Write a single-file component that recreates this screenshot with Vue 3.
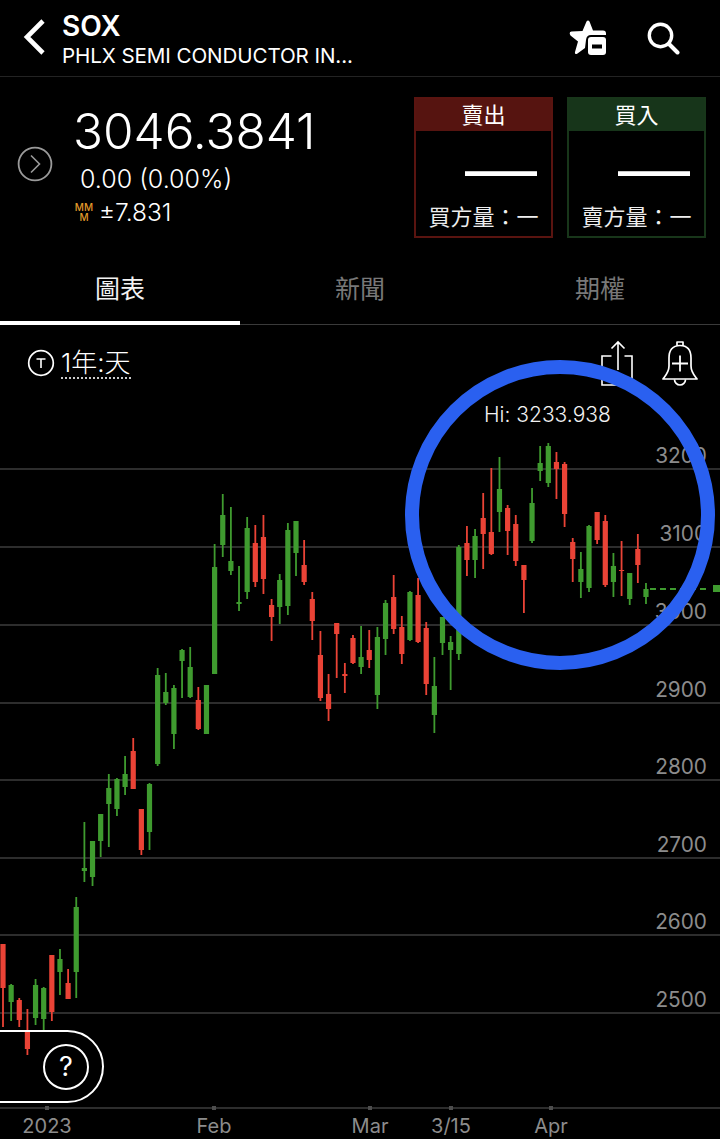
<script setup>
const candles = [
  ['r',944,988,944,1027],['g',985,1002,984,1021],['r',1000,1020,998,1027],['r',1032,1049,1009,1055],
  ['g',985,1018,979,1025],['g',988,1019,987,1030],['r',955,1012,955,1021],['g',959,972,949,995],
  ['r',983,999,969,999],['g',907,972,897,998],['g',868,871,822,882],['g',841,877,841,886],
  ['g',814,841,814,857],['g',788,804,774,847],['g',779,809,778,816],['g',774,787,756,795],
  ['r',751,789,738,789],['r',809,850,809,855],['g',784,832,783,850],['g',675,764,668,766],
  ['g',692,703,673,705],['g',688,734,685,749],['g',650,661,649,698],['g',667,697,647,698],
  ['r',700,729,687,730],['g',685,734,685,734],['g',567,674,544,674],['g',515,545,494,557],
  ['g',561,571,507,575],['g',602,604,566,611],['g',528,592,517,599],['r',543,582,525,587],
  ['r',537,579,515,594],['r',605,617,599,641],['g',580,607,574,624],['g',530,606,523,615],
  ['g',521,553,521,576],['r',565,582,540,585],['r',599,621,592,640],['r',655,698,631,701],
  ['r',694,709,674,721],['r',623,634,623,678],['r',674,676,663,693],['r',638,663,635,664],
  ['g',657,667,626,674],['r',650,660,630,668],['g',637,695,627,709],['g',603,639,600,655],
  ['r',597,629,575,634],['r',627,654,616,664],['g',592,640,591,641],['r',595,642,578,643],
  ['r',628,684,622,695],['g',686,715,657,733],['g',617,643,617,655],['g',642,650,636,690],
  ['g',547,654,545,660],['r',543,560,526,576],['g',536,560,529,578],['r',518,534,493,569],
  ['r',532,554,468,555],['g',489,512,457,532],['r',508,531,505,555],['r',524,561,515,566],
  ['r',565,580,565,613],['g',503,541,488,543],['g',463,471,446,481],['g',446,483,443,487],
  ['r',462,469,452,499],['r',464,514,462,527],['r',542,559,538,582],['g',569,582,552,598],
  ['g',526,588,525,592],['r',512,540,512,544],['r',521,585,515,587],['g',566,582,553,597],
  ['r',570,571,541,596],['g',573,599,573,605],['r',549,565,534,583],['g',589,597,583,604],
].map(([c, bt, bb, wt, wb], i) => ({ c, bt, bb, wt, wb, x: 3 + i * 8.139 }))

const grid = [
  { y: 469, label: '3200' }, { y: 547, label: '3100' }, { y: 625, label: '3000' },
  { y: 703, label: '2900' }, { y: 780, label: '2800' }, { y: 858, label: '2700' },
  { y: 935, label: '2600' }, { y: 1013, label: '2500' },
]
const months = [
  { x: 47, label: '2023' }, { x: 214, label: 'Feb' }, { x: 370, label: 'Mar' },
  { x: 451, label: '3/15' }, { x: 551, label: 'Apr' },
]
</script>

<template>
  <div class="screen">
    <header class="top">
      <svg class="back" viewBox="0 0 30 40" width="30" height="40">
        <path d="M20 3 L4 19 L20 35" fill="none" stroke="#fff" stroke-width="4.6" />
      </svg>
      <div class="title">
        <div class="sym">SOX</div>
        <div class="name">PHLX SEMI CONDUCTOR IN...</div>
      </div>
      <svg class="star" viewBox="0 0 38 36" width="38" height="36">
        <path d="M17.5 1.5 Q19 -.5 20.5 1.5 L24 10.5 L34 10.5 Q37 10.5 37 13.5 V15 H22 Q17.5 15 17 20 L16 28 L8.5 33.5 Q5.5 35 6 32 L9 21.5 L1.5 15.5 Q-.5 12 2.5 11.5 L13.5 11 Z" fill="#fff" />
        <rect x="19" y="17" width="18" height="18" rx="3" fill="#fff" />
        <rect x="23" y="24.5" width="10" height="4" fill="#000" />
      </svg>
      <svg class="search" viewBox="0 0 34 34" width="34" height="34">
        <circle cx="14.5" cy="14.5" r="11.2" fill="none" stroke="#fff" stroke-width="3.4" />
        <path d="M23 23 L31.5 31.5" stroke="#fff" stroke-width="4" stroke-linecap="round" />
      </svg>
    </header>

    <section class="quote">
      <svg class="more" viewBox="0 0 36 36" width="36" height="36">
        <circle cx="18" cy="18" r="16.4" fill="none" stroke="#9a9a9a" stroke-width="1.8" />
        <path d="M14 9.5 L22.5 18 L14 26.5" fill="none" stroke="#9a9a9a" stroke-width="1.6" />
      </svg>
      <div class="prices">
        <div class="last">3046.3841</div>
        <div class="change">0.00 (0.00%)</div>
        <div class="range">
          <span class="mmm">MM<br />M</span>
          <span>±7.831</span>
        </div>
      </div>
      <div class="boxes">
        <div class="box sell">
          <div class="box-head">賣出</div>
          <div class="box-price">—</div>
          <div class="box-vol">買方量：一</div>
        </div>
        <div class="box buy">
          <div class="box-head">買入</div>
          <div class="box-price">—</div>
          <div class="box-vol">賣方量：一</div>
        </div>
      </div>
    </section>

    <nav class="tabs">
      <div class="tab active">圖表</div>
      <div class="tab">新聞</div>
      <div class="tab">期權</div>
    </nav>

    <div class="tools">
      <svg class="t-icon" viewBox="0 0 28 28" width="28" height="28">
        <circle cx="14" cy="14" r="12.3" fill="none" stroke="#fff" stroke-width="1.7" />
        <path d="M9.5 10 H18.5 M14 10 V19" fill="none" stroke="#fff" stroke-width="1.6" />
      </svg>
      <span class="period">1年:天</span>
      <svg class="share" viewBox="0 0 32 46" width="32" height="46">
        <path d="M10.5 16 H1 V45 H31 V16 H23.5" fill="none" stroke="#fff" stroke-width="1.6" />
        <path d="M17 2 V30 M10.5 8.5 L17 2 L23.5 8.5" fill="none" stroke="#fff" stroke-width="1.6" />
      </svg>
      <svg class="bell" viewBox="0 0 36 46" width="36" height="46">
        <path d="M15 6 V2 H21 V6 M18 5.5 C26 5.5 29 11 29 18 V26 C29 32 32 35 35 39 H1 C4 35 7 32 7 26 V18 C7 11 10 5.5 18 5.5 Z" fill="none" stroke="#fff" stroke-width="1.7" stroke-linejoin="round" />
        <path d="M12.5 39.5 A5.5 5.5 0 0 0 23.5 39.5" fill="none" stroke="#fff" stroke-width="1.7" />
        <path d="M10 23.5 H26 M18 15.5 V31.5" fill="none" stroke="#fff" stroke-width="1.8" />
      </svg>
    </div>

    <svg class="chart" viewBox="0 388 720 751" width="720" height="751">
      <g v-for="g in grid" :key="g.y">
        <line x1="0" x2="720" :y1="g.y" :y2="g.y" class="gridline" />
        <text x="707" :y="g.y - 6" text-anchor="end" class="axis">{{ g.label }}</text>
      </g>
      <text x="484" y="422" class="hi">Hi: 3233.938</text>
      <g v-for="(k, i) in candles" :key="i" :class="k.c === 'r' ? 'up' : 'down'">
        <rect :x="k.x - 0.9" :y="k.wt" width="1.8" :height="k.wb - k.wt" />
        <rect :x="k.x - 2.6" :y="k.bt" width="5.2" :height="k.bb - k.bt" />
      </g>
      <line x1="650" x2="708" y1="589" y2="589" class="last-line" />
      <rect x="713" y="585" width="7" height="7" class="last-tag" />
      <line x1="0" x2="720" y1="1108" y2="1108" class="xline" />
      <g v-for="m in months" :key="m.label">
        <rect :x="m.x - 2" y="1106" width="4" height="4" class="tick" />
        <text :x="m.x" y="1133" text-anchor="middle" class="axis xlabel">{{ m.label }}</text>
      </g>
    </svg>

    <div class="help"><span class="q">?</span></div>
    <div class="ring"></div>
  </div>
</template>

<style>
html, body { margin: 0; background: #000; }
</style>

<style scoped>
.screen {
  position: relative;
  width: 720px;
  height: 1139px;
  overflow: hidden;
  background: #000;
  color: #fff;
  font-family: Inter, "Noto Sans CJK TC", sans-serif;
}
.top {
  display: flex;
  align-items: center;
  height: 77px;
  padding: 0 40px 0 23px;
  box-sizing: border-box;
  border-bottom: 1px solid #232323;
}
.back { flex: none; margin-right: 9px; }
.title { flex: 1; align-self: flex-start; margin-top: 11px; }
.sym { font-size: 28px; font-weight: 600; line-height: 30px; }
.name { font-size: 20.6px; line-height: 24px; margin-top: 3px; letter-spacing: -0.1px; }
.star { flex: none; margin-right: 39px; }
.search { flex: none; }

.quote {
  display: flex;
  height: 177px;
}
.more { flex: none; margin: 69px 0 0 17px; }
.prices { flex: none; width: 361px; padding-left: 20px; box-sizing: border-box; }
.last { font-size: 49.5px; line-height: 54px; margin-top: 27px; font-weight: 300; }
.change { font-size: 25px; line-height: 30px; margin: 6px 0 0 7px; font-weight: 300; }
.range { display: flex; align-items: center; font-size: 24.5px; line-height: 30px; margin-top: 3px; font-weight: 300; }
.mmm {
  color: #e39a2b;
  font-size: 10px;
  line-height: 10px;
  text-align: center;
  width: 20px;
  margin: 0 5px 0 1px;
  font-weight: 500;
}
.boxes { display: flex; gap: 14px; margin-top: 20px; }
.box {
  width: 139px;
  height: 141px;
  box-sizing: border-box;
  border: 2px solid;
  display: flex;
  flex-direction: column;
  align-items: center;
}
.sell { border-color: #5a1410; }
.buy { border-color: #18361a; }
.box-head { width: 100%; height: 32px; text-align: center; font-size: 22px; line-height: 33px; flex: none; }
.sell .box-head { background: #561410; }
.buy .box-head { background: #17351a; }
.box-price {
  align-self: flex-end;
  margin: 6px 14px 0 0;
  height: 60px;
  width: 72px;
  font-family: "Liberation Sans", sans-serif;
  font-size: 72px;
  line-height: 60px;
}
.box-vol { font-size: 22px; line-height: 24px; margin-top: 8px; color: #eee; white-space: nowrap; }

.tabs {
  display: flex;
  height: 71px;
  box-sizing: border-box;
  border-bottom: 1px solid #3a3a3a;
}
.tab {
  flex: 1;
  text-align: center;
  font-size: 25px;
  line-height: 70px;
  color: #787878;
  box-sizing: border-box;
}
.tab.active { color: #f2f2f2; border-bottom: 4px solid #fff; height: 71px; }

.tools {
  display: flex;
  align-items: center;
  height: 63px;
  box-sizing: border-box;
  padding-top: 12px;
}
.t-icon { flex: none; margin: 0 6px 0 27px; }
.period {
  flex: none;
  margin: 2px auto 0 0;
  font-size: 26px;
  line-height: 28px;
  border-bottom: 2px dotted #ccc;
  font-weight: 300;
}
.share { flex: none; margin: 0 29px 0 0; }
.bell { flex: none; margin: 0 22px 0 0; }

.chart { display: block; }
.gridline { stroke: #3d3d3d; stroke-width: 1.5; }
.xline { stroke: #3d3d3d; stroke-width: 1.5; }
.tick { fill: #4d4d4d; }
.axis { fill: #8c8c8c; font-size: 20.8px; }
.xlabel { font-size: 20px; }
.hi { fill: #f2f2f2; font-size: 21px; font-weight: 300; }
.up rect { fill: #ea4336; }
.down rect { fill: #3f9b2f; }
.last-line { stroke: #3f9b2f; stroke-width: 1.8; stroke-dasharray: 6 4; }
.last-tag { fill: #3f9b2f; }

.help {
  position: absolute;
  left: -60px;
  top: 1030px;
  width: 164px;
  height: 73px;
  box-sizing: border-box;
  border: 2px solid #fff;
  border-radius: 37px;
  display: flex;
  align-items: center;
  justify-content: flex-end;
  padding-right: 13px;
}
.q {
  width: 46px;
  height: 46px;
  box-sizing: border-box;
  border: 2px solid #fff;
  border-radius: 50%;
  text-align: center;
  font-size: 27px;
  line-height: 42px;
  font-weight: 400;
}
.ring {
  position: absolute;
  left: 405px;
  top: 360px;
  width: 310px;
  height: 310px;
  box-sizing: border-box;
  border: 14px solid #2a60f0;
  border-radius: 50%;
}
</style>
